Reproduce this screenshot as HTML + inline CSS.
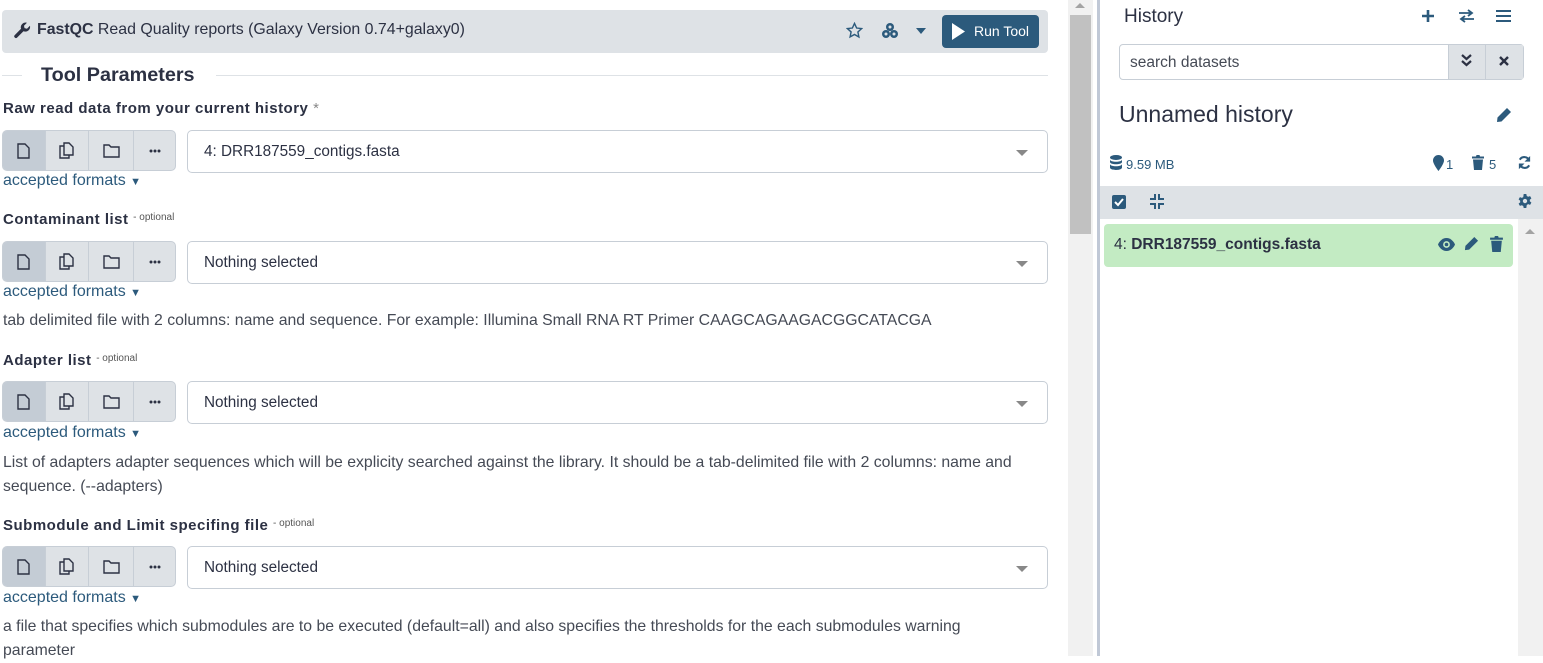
<!DOCTYPE html>
<html><head><meta charset="utf-8"><style>
*{box-sizing:border-box;margin:0;padding:0}
body{width:1543px;height:656px;overflow:hidden;background:#fff;font-family:"Liberation Sans",sans-serif;color:#2c3143;position:relative}
.abs{position:absolute}
.hdr{left:2px;top:10px;width:1046px;height:43px;background:#dee2e6;border-radius:4px}
.lbl{left:3px;font-size:15px;letter-spacing:0.5px;font-weight:bold;color:#2c3143}
.opt{font-size:10px;letter-spacing:0;font-weight:normal;color:#555;vertical-align:4px}
.grp{left:2px;width:174px;height:41px;border:1px solid #c7ced6;border-radius:5px;background:#dee2e6;display:flex;overflow:hidden}
.grp div{height:100%;display:flex;align-items:center;justify-content:center;border-right:1px solid #c7ced6}
.grp div:last-child{border-right:none}
.sel{left:187px;width:861px;height:43px;border:1px solid #c7ced6;border-radius:5px;font-size:15.3px;padding:12px 0 0 16px;color:#2c3143}
.sel:after{content:"";position:absolute;right:19px;top:19px;border-left:6px solid transparent;border-right:6px solid transparent;border-top:6px solid #888}
.fmt{left:3px;font-size:16px;color:#2c5a7c}
.help{left:3px;font-size:15.8px;color:#454a55;line-height:24px;width:1048px}
.ic{fill:#2c5a7c}
</style></head><body>
<div class="abs hdr"></div>
<svg class="abs" style="left:14px;top:22px" width="17" height="17" viewBox="0 0 16 16"><path fill="#2c3143" d="M15 3.5l-2.8 2.8-2.3-.5-.5-2.3L12.2.7A4.5 4.5 0 0 0 6.6 6.4L.7 12.3a1.6 1.6 0 0 0 2.3 2.3l5.9-5.9A4.5 4.5 0 0 0 15 3.5z"/></svg>
<div class="abs" style="left:37px;top:21px;font-size:15.9px;color:#2c3143"><b>FastQC</b> Read Quality reports (Galaxy Version 0.74+galaxy0)</div>
<svg class="abs" style="left:846px;top:22px" width="17" height="17" viewBox="0 0 24 24"><path fill="none" stroke="#2c5a7c" stroke-width="2" d="M12 2l3 6.5 7 .8-5.2 4.8 1.4 7L12 17.6 5.8 21l1.4-7L2 9.3l7-.8z"/></svg>
<svg class="abs" style="left:881px;top:22px" width="18" height="17" viewBox="0 0 18 17"><g class="ic"><circle cx="9" cy="5" r="4"/><circle cx="5" cy="12" r="4"/><circle cx="13" cy="12" r="4"/></g><g fill="#dee2e6"><circle cx="9" cy="5" r="1.5"/><circle cx="5" cy="12" r="1.5"/><circle cx="13" cy="12" r="1.5"/></g></svg>
<div class="abs" style="left:916px;top:28px;border-left:5px solid transparent;border-right:5px solid transparent;border-top:6px solid #2c5a7c"></div>
<div class="abs" style="left:942px;top:15px;width:97px;height:33px;background:#2c5a7c;border-radius:4px;color:#fff;font-size:14px"><svg class="abs" style="left:10px;top:8px" width="13" height="17" viewBox="0 0 13 17"><path fill="#fff" d="M0 0l13 8.5L0 17z"/></svg><span class="abs" style="left:32px;top:8px">Run Tool</span></div>

<div class="abs" style="left:2px;top:75px;width:20px;height:1px;background:#dee2e6"></div>
<div class="abs" style="left:216px;top:75px;width:832px;height:1px;background:#dee2e6"></div>
<div class="abs" style="left:41px;top:64px;font-size:19.8px;font-weight:bold;color:#2c3143">Tool Parameters</div>

<div class="abs lbl" style="top:100px">Raw read data from your current history <span style="color:#888;font-weight:normal">*</span></div>
<div class="abs grp" style="top:130px"></div>
<div class="abs sel" style="top:130px">4: DRR187559_contigs.fasta</div>
<div class="abs fmt" style="top:172px">accepted formats <span style="font-size:11px">▼</span></div>

<div class="abs lbl" style="top:211px">Contaminant list <span class="opt">- optional</span></div>
<div class="abs grp" style="top:241px"></div>
<div class="abs sel" style="top:241px">Nothing selected</div>
<div class="abs fmt" style="top:283px">accepted formats <span style="font-size:11px">▼</span></div>
<div class="abs help" style="top:309px">tab delimited file with 2 columns: name and sequence. For example: Illumina Small RNA RT Primer CAAGCAGAAGACGGCATACGA</div>

<div class="abs lbl" style="top:352px">Adapter list <span class="opt">- optional</span></div>
<div class="abs grp" style="top:381px"></div>
<div class="abs sel" style="top:381px">Nothing selected</div>
<div class="abs fmt" style="top:424px">accepted formats <span style="font-size:11px">▼</span></div>
<div class="abs help" style="top:451px">List of adapters adapter sequences which will be explicity searched against the library. It should be a tab-delimited file with 2 columns: name and sequence. (--adapters)</div>

<div class="abs lbl" style="top:517px">Submodule and Limit specifing file <span class="opt">- optional</span></div>
<div class="abs grp" style="top:546px"></div>
<div class="abs sel" style="top:546px">Nothing selected</div>
<div class="abs fmt" style="top:589px">accepted formats <span style="font-size:11px">▼</span></div>
<div class="abs help" style="top:615px;width:1000px">a file that specifies which submodules are to be executed (default=all) and also specifies the thresholds for the each submodules warning parameter</div>

<div class="abs" style="left:1068px;top:0;width:25px;height:656px;background:#f1f1f1"></div>
<div class="abs" style="left:1075px;top:3px;border-left:5px solid transparent;border-right:5px solid transparent;border-bottom:5px solid #a3a3a3"></div>
<div class="abs" style="left:1070px;top:15px;width:21px;height:219px;background:#c1c1c1"></div>
<div class="abs" style="left:1097px;top:0;width:3px;height:656px;background:#c0c8d6"></div>

<div class="abs" style="left:1124px;top:6px;font-size:19px;color:#2c3143">History</div>
<svg class="abs" style="left:1421px;top:9px" width="14" height="14" viewBox="0 0 14 14"><path d="M7 1v12M1 7h12" stroke="#2c5a7c" stroke-width="2.6"/></svg>
<svg class="abs" style="left:1458px;top:9px" width="17" height="14" viewBox="0 0 17 14"><path d="M1 4h13M10 1l4 3-4 3M16 10H3M7 7l-4 3 4 3" fill="none" stroke="#2c5a7c" stroke-width="1.8"/></svg>
<svg class="abs" style="left:1496px;top:9px" width="15" height="14" viewBox="0 0 15 14"><path d="M0 2h15M0 7h15M0 12h15" stroke="#2c5a7c" stroke-width="2"/></svg>
<div class="abs" style="left:1119px;top:44px;width:405px;height:36px;border:1px solid #c7ced6;border-radius:4px"></div>
<div class="abs" style="left:1448px;top:45px;width:75px;height:34px;background:#dee2e6;border-left:1px solid #c7ced6"></div>
<div class="abs" style="left:1485px;top:45px;width:1px;height:34px;background:#c7ced6"></div>
<div class="abs" style="left:1130px;top:54px;font-size:15.5px;color:#454a55">search datasets</div>
<svg class="abs" style="left:1461px;top:54px" width="11" height="13" viewBox="0 0 11 13"><path d="M1 1l4.5 4 4.5-4M1 7l4.5 4 4.5-4" fill="none" stroke="#2c3143" stroke-width="2.2"/></svg>
<svg class="abs" style="left:1499px;top:56px" width="10" height="10" viewBox="0 0 10 10"><path d="M1 1l8 8M9 1l-8 8" stroke="#2c3143" stroke-width="2.4"/></svg>
<div class="abs" style="left:1119px;top:101px;font-size:23px;color:#2c3143">Unnamed history</div>
<svg class="abs" style="left:1496px;top:107px" width="16" height="16" viewBox="0 0 16 16"><path fill="#2c5a7c" d="M11 1l4 4-9.5 9.5L1 15l.5-4.5z"/></svg>
<svg class="abs" style="left:1110px;top:155px" width="12" height="15" viewBox="0 0 12 15"><g fill="#2c5a7c"><ellipse cx="6" cy="2.5" rx="6" ry="2.5"/><path d="M0 4.5c0 3 12 3 12 0V7c0 3-12 3-12 0zM0 9c0 3 12 3 12 0v3.5c0 3.3-12 3.3-12 0z"/></g></svg>
<div class="abs" style="left:1126px;top:157px;font-size:13px;color:#2c5a7c">9.59 MB</div>
<svg class="abs" style="left:1433px;top:155px" width="11" height="16" viewBox="0 0 11 16"><path fill="#2c5a7c" d="M5.5 0A5.5 5.5 0 0 0 0 5.5C0 9 5.5 16 5.5 16S11 9 11 5.5A5.5 5.5 0 0 0 5.5 0z"/></svg>
<div class="abs" style="left:1446px;top:157px;font-size:13px;color:#2c5a7c">1</div>
<svg class="abs" style="left:1472px;top:155px" width="12" height="15" viewBox="0 0 12 15"><path fill="#2c5a7c" d="M0 1.5h4l.5-1.5h3L8 1.5h4v2H0zM1 4.5h10L10 15H2z"/></svg>
<div class="abs" style="left:1489px;top:157px;font-size:13px;color:#2c5a7c">5</div>
<svg class="abs" style="left:1517px;top:155px" width="15" height="15" viewBox="0 0 16 16"><path d="M13 6A5.5 5.5 0 0 0 3 5M3 10a5.5 5.5 0 0 0 10 1" fill="none" stroke="#2c5a7c" stroke-width="2.2"/><path fill="#2c5a7c" d="M14 1v6H8zM2 15V9h6z"/></svg>
<div class="abs" style="left:1100px;top:186px;width:443px;height:33px;background:#dee2e6"></div>
<svg class="abs" style="left:1112px;top:195px" width="14" height="14" viewBox="0 0 14 14"><rect width="14" height="14" rx="2" fill="#2c5a7c"/><path d="M3 7l3 3 5-6" fill="none" stroke="#fff" stroke-width="2"/></svg>
<svg class="abs" style="left:1150px;top:194px" width="14" height="15" viewBox="0 0 14 15"><path d="M5 0v5H0M9 0v5h5M5 15v-5H0M9 15v-5h5" fill="none" stroke="#2c5a7c" stroke-width="2"/></svg>
<svg class="abs" style="left:1518px;top:194px" width="14" height="14" viewBox="0 0 16 16"><path fill="#2c5a7c" d="M6.5 0h3l.5 2.3 1.6.9 2.2-.8 1.5 2.6-1.8 1.5v1.8l1.8 1.5-1.5 2.6-2.2-.8-1.6.9L9.5 16h-3L6 13.7l-1.6-.9-2.2.8L.7 11l1.8-1.5V7.7L.7 6.2 2.2 3.6l2.2.8L6 3.5z"/><circle cx="8" cy="8" r="2.5" fill="#dee2e6"/></svg>
<div class="abs" style="left:1518px;top:219px;width:25px;height:437px;background:#f1f1f1"></div>
<div class="abs" style="left:1525px;top:229px;border-left:5px solid transparent;border-right:5px solid transparent;border-bottom:5px solid #a3a3a3"></div>
<div class="abs" style="left:1104px;top:224px;width:409px;height:43px;background:#c3ebc3;border-radius:4px"></div>
<div class="abs" style="left:1114px;top:236px;font-size:15.5px;color:#2c3143">4: <b>DRR187559_contigs.fasta</b></div>
<svg class="abs" style="left:1438px;top:238px" width="17" height="13" viewBox="0 0 17 13"><path fill="#2c5a7c" d="M8.5 0C4 0 1 4 0 6.5 1 9 4 13 8.5 13S16 9 17 6.5C16 4 13 0 8.5 0z"/><circle cx="8.5" cy="6.5" r="3.4" fill="#c3ebc3"/><circle cx="8.5" cy="6.5" r="1.8" fill="#2c5a7c"/></svg>
<svg class="abs" style="left:1464px;top:236px" width="15" height="15" viewBox="0 0 16 16"><path fill="#2c5a7c" d="M11 1l4 4-9.5 9.5L1 15l.5-4.5z"/></svg>
<svg class="abs" style="left:1490px;top:236px" width="13" height="16" viewBox="0 0 12 15"><path fill="#2c5a7c" d="M0 1.5h4l.5-1.5h3L8 1.5h4v2H0zM1 4.5h10L10 15H2z"/></svg>

<script>
var icons=['<svg width="13" height="16" viewBox="0 0 13 16"><path d="M1 1h7l4 4v10H1z" fill="none" stroke="#2c3143" stroke-width="1.4"/></svg>',
'<svg width="15" height="17" viewBox="0 0 15 17"><path d="M5 1h5l4 4v8H5z M5 4H1v12h9v-3" fill="none" stroke="#2c3143" stroke-width="1.4"/></svg>',
'<svg width="17" height="14" viewBox="0 0 17 14"><path d="M1 1h5l2 2h8v10H1z" fill="none" stroke="#2c3143" stroke-width="1.4"/></svg>',
'<svg width="12" height="4" viewBox="0 0 12 4"><circle cx="2" cy="2" r="1.5" fill="#2c3143"/><circle cx="6" cy="2" r="1.5" fill="#2c3143"/><circle cx="10" cy="2" r="1.5" fill="#2c3143"/></svg>'];
var w=[43,44,46,41];
document.querySelectorAll('.grp').forEach(function(g){g.innerHTML=icons.map(function(s,i){return '<div style="width:'+w[i]+'px;'+(i==0?'background:#c4ccd5':'')+'">'+s+'</div>'}).join('')});
</script>
</body></html>
